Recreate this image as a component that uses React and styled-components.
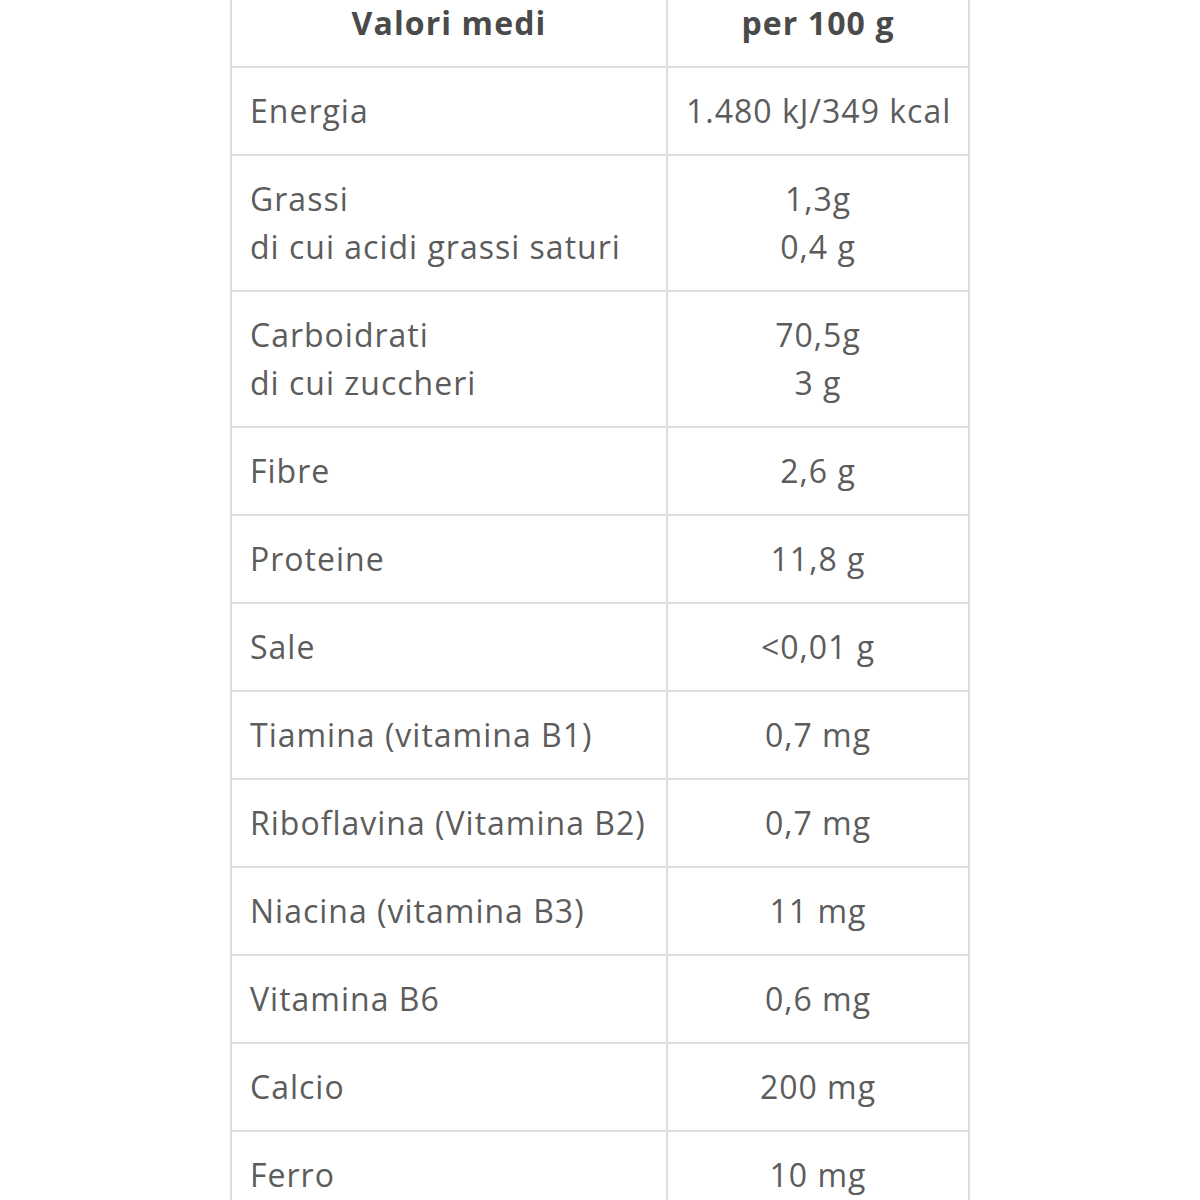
import React from "react";
import styled, { createGlobalStyle } from "styled-components";

const ROWS = [
  { label: ["Energia"], value: ["1.480 kJ/349 kcal"] },
  { label: ["Grassi", "di cui acidi grassi saturi"], value: ["1,3g", "0,4 g"] },
  { label: ["Carboidrati", "di cui zuccheri"], value: ["70,5g", "3 g"] },
  { label: ["Fibre"], value: ["2,6 g"] },
  { label: ["Proteine"], value: ["11,8 g"] },
  { label: ["Sale"], value: ["<0,01 g"] },
  { label: ["Tiamina (vitamina B1)"], value: ["0,7 mg"] },
  { label: ["Riboflavina (Vitamina B2)"], value: ["0,7 mg"] },
  { label: ["Niacina (vitamina B3)"], value: ["11 mg"] },
  { label: ["Vitamina B6"], value: ["0,6 mg"] },
  { label: ["Calcio"], value: ["200 mg"] },
  { label: ["Ferro"], value: ["10 mg"] },
];

const GlobalStyle = createGlobalStyle`
  html, body {
    margin: 0;
    padding: 0;
    background: #fff;
    overflow: hidden;
  }
  body {
    font-family: "Open Sans", "Noto Sans", sans-serif;
  }
`;

const Page = styled.div`
  padding-left: 230px;
  height: 1200px;
  overflow: hidden;
`;

const Table = styled.table`
  margin-top: -22px;
  border-collapse: separate;
  border-spacing: 0;
  table-layout: fixed;
  width: 740px;
  border-top: 2px solid #dedede;
  border-left: 2px solid #dedede;
`;

const Cell = styled.td`
  box-sizing: border-box;
  padding: 19px 18px;
  border-right: 2px solid #dedede;
  border-bottom: 2px solid #dedede;
  font-size: 32px;
  line-height: 48px;
  letter-spacing: 1px;
  color: #5c5c5c;
  text-align: ${(p) => (p.$center ? "center" : "left")};
  vertical-align: middle;
  white-space: nowrap;
  overflow: visible;
`;

const HeadCell = styled(Cell).attrs({ as: "th" })`
  font-weight: 700;
  color: #4a4a4a;
  text-align: center;
  letter-spacing: 1.1px;
`;

const Line = styled.div``;

export default function App() {
  return (
    <Page>
      <GlobalStyle />
      <Table>
        <colgroup>
          <col style={{ width: 436 }} />
          <col style={{ width: 302 }} />
        </colgroup>
        <thead>
          <tr>
            <HeadCell>Valori medi</HeadCell>
            <HeadCell>per 100 g</HeadCell>
          </tr>
        </thead>
        <tbody>
          {ROWS.map((row, i) => (
            <tr key={i}>
              <Cell>
                {row.label.map((t) => (
                  <Line key={t}>{t}</Line>
                ))}
              </Cell>
              <Cell $center>
                {row.value.map((t) => (
                  <Line key={t}>{t}</Line>
                ))}
              </Cell>
            </tr>
          ))}
        </tbody>
      </Table>
    </Page>
  );
}
